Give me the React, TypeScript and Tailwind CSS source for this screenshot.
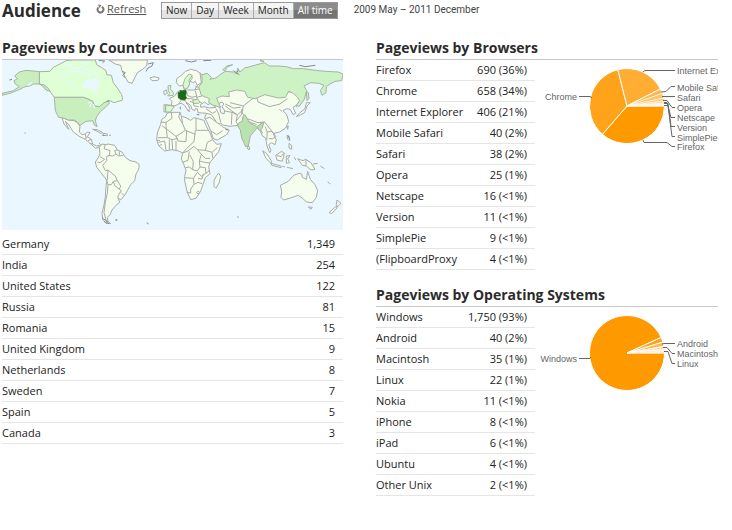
import React, { useState } from "react";

type Row = [string, string];

const countries: Row[] = [
  ["Germany", "1,349"],
  ["India", "254"],
  ["United States", "122"],
  ["Russia", "81"],
  ["Romania", "15"],
  ["United Kingdom", "9"],
  ["Netherlands", "8"],
  ["Sweden", "7"],
  ["Spain", "5"],
  ["Canada", "3"],
];

const browsers: Row[] = [
  ["Firefox", "690 (36%)"],
  ["Chrome", "658 (34%)"],
  ["Internet Explorer", "406 (21%)"],
  ["Mobile Safari", "40 (2%)"],
  ["Safari", "38 (2%)"],
  ["Opera", "25 (1%)"],
  ["Netscape", "16 (<1%)"],
  ["Version", "11 (<1%)"],
  ["SimplePie", "9 (<1%)"],
  ["(FlipboardProxy", "4 (<1%)"],
];

const systems: Row[] = [
  ["Windows", "1,750 (93%)"],
  ["Android", "40 (2%)"],
  ["Macintosh", "35 (1%)"],
  ["Linux", "22 (1%)"],
  ["Nokia", "11 (<1%)"],
  ["iPhone", "8 (<1%)"],
  ["iPad", "6 (<1%)"],
  ["Ubuntu", "4 (<1%)"],
  ["Other Unix", "2 (<1%)"],
];

function StatTable({ rows, label }: { rows: Row[]; label: string }) {
  return (
    <table aria-label={label} className="w-full border-separate border-spacing-0">
      <tbody>
        {rows.map(([name, value]) => (
          <tr key={name} className="h-[21px]">
            <th scope="row" className="border-b border-[#e5e5e5] p-0 text-left font-normal whitespace-nowrap">{name}</th>
            <td className="border-b border-[#e5e5e5] p-0 pr-2 text-right whitespace-nowrap">{value}</td>
          </tr>
        ))}
      </tbody>
    </table>
  );
}

function SectionTitle({ children }: { children: React.ReactNode }) {
  return (
    <h2 className="h-[22px] border-b border-[#c8c8c8] text-[14px] leading-5 font-bold whitespace-nowrap text-[#2b2b2b]">
      {children}
    </h2>
  );
}

type Slice = { value: number; color: string };
type PieLabel = { text: string; x: number; y: number; line: string; anchor?: "end" };

function Pie({ slices, labels, title }: { slices: Slice[]; labels: PieLabel[]; title: string }) {
  const total = slices.reduce((sum, s) => sum + s.value, 0);
  const cx = 92;
  const cy = 46;
  const r = 37.5;
  let angle = 0;
  const wedges = slices.map((s) => {
    const start = angle;
    angle += (s.value / total) * Math.PI * 2;
    const large = angle - start > Math.PI ? 1 : 0;
    return {
      color: s.color,
      d: `M${cx} ${cy}L${cx + r * Math.cos(start)} ${cy + r * Math.sin(start)}A${r} ${r} 0 ${large} 1 ${cx + r * Math.cos(angle)} ${cy + r * Math.sin(angle)}Z`,
    };
  });
  return (
    <svg role="img" aria-label={title} className="h-[100px] w-full min-w-0 flex-1 overflow-hidden">
      {wedges.map((w, i) => (
        <path key={i} d={w.d} fill={w.color} stroke="#fff" strokeWidth={i < 4 ? 1 : 0.5} />
      ))}
      {labels.map((l) => (
        <g key={l.text}>
          <path d={l.line} fill="none" stroke="#666" strokeWidth={1} />
          <text
            x={l.x}
            y={l.y}
            textAnchor={l.anchor ?? "start"}
            fill="#666"
            className="font-['Liberation_Sans',Arial,sans-serif] text-[9px]"
          >
            {l.text}
          </text>
        </g>
      ))}
    </svg>
  );
}

const browserSlices: Slice[] = [
  { value: 690, color: "#ff9900" },
  { value: 658, color: "#ffa31a" },
  { value: 406, color: "#ffad33" },
  { value: 40, color: "#ffb84d" },
  { value: 38, color: "#ffc266" },
  { value: 25, color: "#ffcc80" },
  { value: 16, color: "#ffd699" },
  { value: 11, color: "#ffe0b3" },
  { value: 9, color: "#ffebcc" },
  { value: 4, color: "#fff5e6" },
];

const browserLabels: PieLabel[] = [
  { text: "Chrome", x: 42, y: 40, line: "M44 36.500H55L57 38", anchor: "end" },
  { text: "Internet Explorer", x: 142, y: 14, line: "M108 12L110 10.500H140" },
  { text: "Mobile Safari", x: 142, y: 31, line: "M126 32L131 31.500L136 26.500H140" },
  { text: "Safari", x: 142, y: 41, line: "M127 36.500H140" },
  { text: "Opera", x: 142, y: 51, line: "M128 40.500H132L137 47.500H140" },
  { text: "Netscape", x: 142, y: 61, line: "M129 42.500H132L136 57.500H140" },
  { text: "Version", x: 142, y: 71, line: "M129 43.500H133L136 66.500H140" },
  { text: "SimplePie", x: 142, y: 81, line: "M129 45.500H133L137 76.500H140" },
  { text: "Firefox", x: 142, y: 90, line: "M108 80L109 82.500H132L137 86.500H140" },
];

const systemSlices: Slice[] = [
  { value: 1750, color: "#ff9900" },
  { value: 40, color: "#ffa31a" },
  { value: 35, color: "#ffb84d" },
  { value: 22, color: "#ffd699" },
  { value: 31, color: "#fff0db" },
];

const systemLabels: PieLabel[] = [
  { text: "Windows", x: 42, y: 55, line: "M44 51.500H55L56 50", anchor: "end" },
  { text: "Android", x: 142, y: 40, line: "M127 37L129 36.500H140" },
  { text: "Macintosh", x: 142, y: 50, line: "M128 40.500H132L137 46.500H140" },
  { text: "Linux", x: 142, y: 60, line: "M129 44.500H133L137 56.500H140" },
];

function WorldMap() {
  return (
    <svg viewBox="6 12 1023 510" role="img" aria-label="World map of pageviews" className="block w-full bg-[#eaf7fe]">
      <g fill="#f5fded" stroke="#aaa" strokeWidth={3} strokeLinejoin="round">
        {/* Greenland and Iceland */}
        <path d="M326 12H442L440 30L428 40L412 50L404 66L396 82L384 78L374 60L366 44L362 28L346 24Z" />
        <path d="M450 66L462 62L478 66L474 73L456 74Z" />
        {/* Mexico and Central America */}
        <path d="M186 185L205 192L222 194L232 200L240 210L238 228L246 236L256 234L262 228L270 230L262 242L274 250L278 264L290 270L298 268L296 275L286 276L270 262L256 250L236 240L220 228L206 206L196 196L206 220L192 204Z" />
        <path d="M256 234L258 246M262 242L256 250M274 250L264 254M278 264L270 262" fill="none" />
        <path d="M278 220L292 221L308 230L302 232L288 224ZM310 232L322 234V239L308 238Z" />
        {/* South America */}
        <g transform="translate(240 222)">
          <path d="M58 52L66 42L78 44L84 42L104 46L112 60L126 66L136 82L150 92L168 96L178 104L176 118L168 132L164 152L152 164L142 182L134 196L124 208L114 206L120 216L108 226L96 240L90 254L82 262L84 274L92 281L78 280L68 268L66 250L72 225L76 200L78 170L80 150L66 132L50 112L46 96L54 84L60 72Z" />
          <path
            d="M76 44L72 56L90 62L88 76L80 80V92M60 80L74 88L60 98L52 96M80 92L68 106L76 122L84 120M84 76L98 78L108 72L104 62L112 60M108 72L116 78L130 76M118 64L118 78M84 120L82 150M84 120L96 130L106 138L112 152L100 154L94 164L84 164L80 150M112 152L122 168L118 178L104 166L100 154M118 178L124 182L114 198V206M124 188L134 198M84 164L82 190L76 218L72 248L80 276"
            fill="none"
          />
        </g>
        {/* Africa */}
        <g transform="translate(450 147)">
          <path d="M36 42L46 36L52 24L64 22L90 22L94 34L108 38L122 46L132 38L162 46L168 62L180 84L188 104L200 118L214 116L206 140L190 160L180 172L176 186L180 206L166 218L160 236L152 258L138 280L122 284L112 262L104 228V214L108 196L102 180L94 162L98 144L86 138L66 134L44 138L26 122L20 104L22 84L32 58Z" />
          <path
            d="M32 52H48L66 40L64 22M36 62L78 94L106 76L98 56L94 34M48 52V64L52 98L24 98M90 22L86 36L98 56M106 76L136 88M138 40V76H176M136 76L132 110L110 130L98 144M110 76L108 110L84 108L78 94M52 98L66 104L84 100M26 112L44 108L48 136M58 104V134M66 104L68 134M78 108V138M98 144L114 138L132 124L142 134L166 136L172 112L188 104M166 136L186 142L202 128M186 142L188 160M118 140L114 166L98 172M106 188L118 186L128 194L130 170M130 170L120 150M128 194L142 198L150 186L148 168L154 148L142 134M154 148L166 160H180M148 168L164 172L180 174M104 218L130 220L142 202L154 214L166 206L180 196M130 220L132 238L122 252V264L110 262M132 238L144 232L156 236M144 220L156 222L160 206M150 186L166 188L168 206M36 118L28 122M30 106L20 106"
            fill="none"
          />
          <path d="M206 204L212 214L208 232L198 250L192 244V226L200 212Z" />
          <path d="M140 262L145 258L149 263L144 267Z" />
        </g>
        {/* Europe and western Asia */}
        <path d="M529 80L530 68L542 60L556 46L572 40L590 44L606 56L640 80L676 100L760 100L900 110L899 134L889 152L892 146L879 154L887 172L879 176L871 160L859 158L849 164L860 176L866 196L857 216L839 228L821 232L822 240L829 252L825 266L815 260L806 266L813 284L809 290L801 270L797 246L787 240L780 222L770 214L740 222L713 208L690 211L668 207L662 200L658 204L670 214L688 222L680 236L652 252L640 248L632 224L620 196L614 184L620 172L594 170L592 158L586 158L584 164L576 160L572 148L560 140L566 150L570 158L564 164L554 148L544 142L536 144L520 152L508 168L492 168L492 146L514 148L516 136L508 128L524 120L534 106L554 102L584 102L592 88L586 76L580 80L570 76L578 64L570 60L564 74L568 80L562 96L554 100L548 88L538 90Z" />
        <path d="M491 106L499 102L502 112L493 116Z" />
        <path
          d="M600 50L604 80L592 88M586 92L600 94M584 102L600 98L608 116L630 122M560 106L562 118L576 124L590 120L586 104M560 128L574 128L590 132L580 140L570 136M546 130L558 136L560 144M590 120L592 134L606 142M580 140L582 150L596 152M606 120L590 124M534 118L544 132L536 144M514 148L524 150M497 148V166M618 158L638 172L648 166M620 172L634 176L648 196M614 188L630 184L648 198L658 204M632 224L650 236L668 224M670 164L700 170L712 178L708 196L714 208M648 158L656 174L662 198M676 144L700 156L722 154M676 150L694 164L712 176L730 162M696 170L694 206M690 140L714 146L730 150L724 176L708 196M730 150L760 126L772 128L774 138L808 152L840 144L862 128M724 160L728 174L742 188L774 200L794 198L808 216L820 232M794 198L780 204M744 196L770 206M796 212L802 228L800 252M802 228L816 226L828 242L818 248L806 248M782 222L788 232M846 166L838 160"
          fill="none"
        />
        {/* Caspian and Black Seas */}
        <path d="M656 142L666 138L672 144L666 152L674 164L672 174L662 170L660 158Z" fill="#eaf7fe" />
        <path d="M602 145L614 138L624 146L632 142L648 154L628 156L612 152L602 154Z" fill="#eaf7fe" />
        {/* Japan, islands of South-East Asia and Oceania */}
        <g transform="translate(675 0)">
          <path d="M214 182L226 177L239 170L246 150L256 140L244 140L240 158L224 171Z" />
          <path d="M68 270L74 274L73 281L68 279Z" />
          <path d="M113 284L126 294L140 316L138 322L122 306ZM138 322L168 330V335L140 328ZM152 298L170 286L178 292L172 316L156 312ZM184 300L195 299L188 308L194 320L184 322ZM218 308L234 314L242 310L258 320L270 340L258 342L244 330L232 328Z" />
          <path d="M243 310V330M154 298L168 302L176 292M186 238L192 240L194 254L188 250ZM192 262L200 268V280L192 276ZM186 212L190 210L188 220Z" />
          <path d="M172 331L180 333M186 334L204 338M208 304L212 312M264 324L278 322M286 330L298 338M308 378L316 384" />
          <path d="M166 388L190 376L206 358L222 352L230 354L232 364L244 370L248 346L256 370L270 386L278 404L274 424L262 440L244 438L234 428L220 418L196 426L176 432L168 424L170 406Z" />
          <path d="M250 453L262 454L258 460ZM336 432L348 442L338 452L334 446ZM334 450L336 456L320 473L312 470Z" />
        </g>
      </g>
      <g stroke="#a7b3a4" strokeWidth={3} strokeLinejoin="round">
        {/* Canada */}
        <path
          d="M118 47L150 46L160 34L180 24L198 14L220 12H286L290 26L304 34L318 44L320 56L334 58L340 80L352 96L365 116L368 132L342 140L330 134L316 140L300 152L284 150L278 136L262 128L250 124H163L150 106L134 88L118 84Z"
          fill="#dfffd5"
        />
        <path
          d="M118 47V84L100 84L88 90L72 93L60 100L30 112L6 118V112L40 104L58 92L46 84L42 74L52 68L44 60L58 48L78 43ZM118 84L130 86L146 98L150 106L138 102L128 90ZM163 124H250L262 128L278 136L284 150L298 152L312 140L326 134L328 142L316 154L302 166L290 182L286 194L291 212L284 208L278 194L258 196L240 208L232 198L222 192H205L190 186L176 184L166 164Z"
          fill="#caefbf"
        />
        {/* Russia */}
        <path
          d="M606 56L622 52L634 64L630 70L648 66L660 56L676 46L700 48L710 54L713 36L720 48L734 36L764 28L793 20L808 30L834 30L860 32L880 38L910 38L940 42L975 46L1015 48L1029 54L1025 74L1005 76L990 84L979 92L978 110L966 118L961 104L972 88L956 82L932 80L912 90L920 104L913 130L897 152L889 148L899 134L893 124L880 112L866 106L856 124L835 126L794 116L766 128L743 124L734 106L710 102L686 108L688 122L666 120L650 126L656 142L662 154L640 148L626 140L628 128L604 118L596 92L606 80Z"
          fill="#cdf2c3"
        />
        <path d="M919 106L925 110L927 128L921 134ZM668 42L680 30L698 26L680 34L676 44Z" fill="#cdf2c3" />
        {/* India */}
        <path
          d="M734 176L742 188L748 200L770 212L792 198L786 218L778 224L772 214L766 222L751 240L745 270L737 272L725 246L721 222L713 210L717 200L727 196L729 180Z"
          fill="#b8e2ae"
        />
        {/* Sweden, United Kingdom, Spain, Romania */}
        <path d="M549 86L555 68L567 54L577 58L567 72L569 84L563 96L553 100Z" fill="#d6fccc" />
        <path d="M504 90L513 88L511 98L521 112L519 118L503 120L509 112L505 104Z" fill="#d6fccc" />
        <path d="M497 147L517 150L521 154L511 168L497 168ZM578 133L594 130L600 138L596 142L582 142Z" fill="#d6fccc" />
      </g>
      {/* Germany */}
      <path d="M534 110L540 108V103L546 105L556 102L559 108L557 120L560 126L554 132L544 131L535 126Z" fill="#176b10" stroke="#386d33" strokeWidth={2} />
      {/* Hudson Bay, Arctic channels and Great Lakes */}
      <path d="M260 72L290 66L300 80L292 96L296 112L288 112L280 100L256 100L246 88Z" fill="#eaf7fe" />
      <path
        d="M190 28L224 24M186 46L204 50L216 44L240 48M206 32L226 38L246 32L256 42L276 44M236 54L258 50L270 64M248 20L270 26M290 36L282 50L298 62M180 64L192 60M204 78L216 74M222 94L230 106M264 140L276 140M272 144L270 154M280 144L284 156M84 88L96 80"
        fill="none"
        stroke="#eaf7fe"
        strokeWidth={4}
      />
      <path
        d="M296 13L314 15L308 20M366 46L376 50L368 58L376 66M444 24L460 20L456 30L444 36L438 46M556 14L574 18L590 14M610 14L634 13M36 70L28 72M74 231H77M308 238H314M330 236V240M306 486L322 496L326 504M346 492H352M348 490L350 494M410 547M708 50L716 44M780 14L792 16M898 28L916 32L946 28M320 136L328 134M298 262L302 266M864 240L870 250M676 220L684 222M712 482L716 484M440 500L446 504M312 496L322 502M700 44L718 56M590 176L598 176M564 164L570 166M541 152V160"
        fill="none"
        stroke="#85898a"
        strokeWidth={3}
      />
    </svg>
  );
}

function RefreshIcon() {
  return (
    <svg viewBox="0 0 9 10" aria-hidden="true" className="h-2.5 w-[9px]" fill="none" stroke="#777" strokeWidth={2}>
      <path d="M5.800 2.800A3 3 0 1 1 2.400 3.400" />
      <path d="M2 0.400L5.400 1L3.600 4.200Z" fill="#777" stroke="none" />
    </svg>
  );
}

const periods = ["Now", "Day", "Week", "Month", "All time"];

export default function App() {
  const [period, setPeriod] = useState("All time");
  return (
    <main className="min-h-screen bg-white pr-3.5 pb-8 pl-0.5 font-['Open_Sans','Trebuchet_MS',sans-serif] text-[11px] leading-4 text-[#222]">
      <header className="flex h-[38px] items-start">
        <h1 className="w-[94px] text-[17px] leading-[22px] font-bold text-[#2b2b2b]">Audience</h1>
        <a href="#refresh" className="flex w-[65px] items-center gap-0.5 pt-px text-[#555]">
          <RefreshIcon />
          <span className="underline">Refresh</span>
        </a>
        <div className="mt-0.5 flex h-[17px] border border-[#999] text-[10px] leading-[15px]">
          {periods.map((p) => (
            <button
              key={p}
              type="button"
              aria-pressed={p === period}
              onClick={() => setPeriod(p)}
              className={
                p === period
                  ? "bg-linear-to-b from-[#8c8c8c] from-50% to-[#747474] to-50% px-1 text-white"
                  : "border-r border-[#aaa] bg-linear-to-b from-[#f6f6f6] from-50% to-[#e3e3e3] to-50% px-1 text-[#222]"
              }
            >
              {p}
            </button>
          ))}
        </div>
        <p className="ml-4 pt-0.5 font-[Roboto,sans-serif] text-[10px] text-[#444]">2009 May – 2011 December</p>
      </header>

      <div className="grid grid-cols-[341fr_342fr] gap-[33px]">
        <section>
          <SectionTitle>Pageviews by Countries</SectionTitle>
          <WorldMap />
          <div className="pt-1">
            <StatTable rows={countries} label="Pageviews by Countries" />
          </div>
        </section>

        <div className="flex min-w-0 flex-col gap-[15px]">
          <section>
            <SectionTitle>Pageviews by Browsers</SectionTitle>
            <div className="flex">
              <div className="w-[159px] shrink-0">
                <StatTable rows={browsers} label="Pageviews by Browsers" />
              </div>
              <Pie slices={browserSlices} labels={browserLabels} title="Browser share" />
            </div>
          </section>
          <section>
            <SectionTitle>Pageviews by Operating Systems</SectionTitle>
            <div className="flex">
              <div className="w-[159px] shrink-0">
                <StatTable rows={systems} label="Pageviews by Operating Systems" />
              </div>
              <Pie slices={systemSlices} labels={systemLabels} title="Operating system share" />
            </div>
          </section>
        </div>
      </div>
    </main>
  );
}
